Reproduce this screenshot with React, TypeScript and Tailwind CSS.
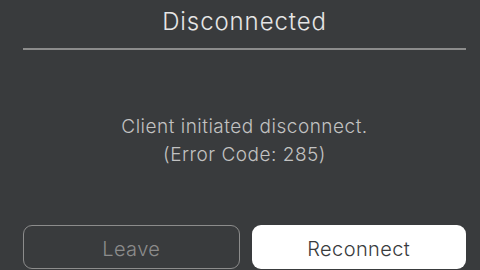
import React from "react";

export default function App() {
  return (
    <div
      className="w-[480px] h-[270px] overflow-hidden bg-[#393b3d] flex flex-col pl-[23px] pr-[14px]"
      style={{ fontFamily: "Inter, 'Noto Sans', sans-serif" }}
    >
      <div className="h-[48px] flex items-center justify-center pb-[4px]">
        <span className="text-[24px] font-light text-[#e6e6e6] tracking-[0.9px]">Disconnected</span>
      </div>
      <div className="h-[2px] bg-[#8c8c8c]" />
      <div className="flex-1 flex flex-col items-center justify-center pt-[6px] text-[19px] font-light leading-[28px] tracking-[0.5px] text-[#c2c2c2]">
        <span>Client initiated disconnect.</span>
        <span>(Error Code: 285)</span>
      </div>
      <div className="flex gap-[12px] pb-[1px]">
        <button className="flex-1 h-[44px] pt-[4px] rounded-[9px] border border-[#8c8c8c] text-[#8c8c8c] text-[20px] font-light tracking-[0.4px]">
          Leave
        </button>
        <button className="flex-1 h-[44px] pt-[4px] rounded-[9px] bg-white text-[#393b3d] text-[20px] font-light tracking-[0.4px]">
          Reconnect
        </button>
      </div>
    </div>
  );
}
